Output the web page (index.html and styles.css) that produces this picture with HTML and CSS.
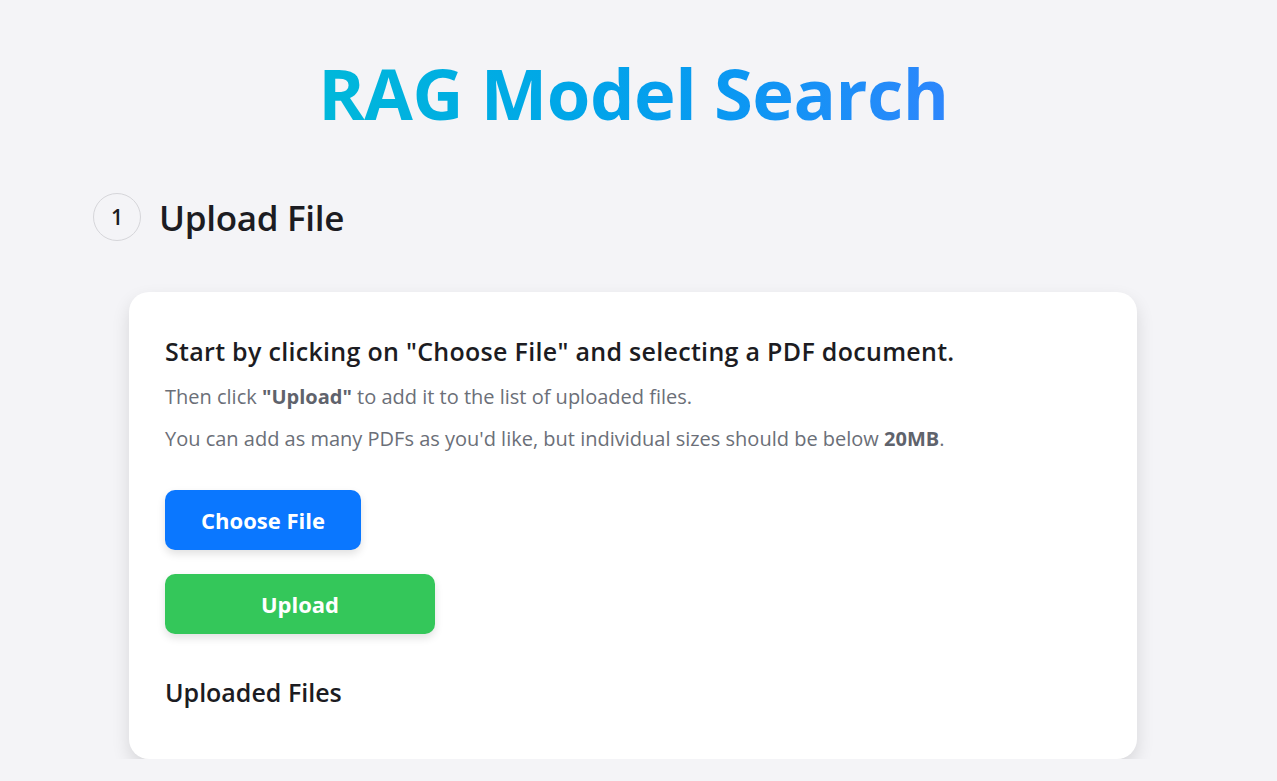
FILE: index.html
```html
<!DOCTYPE html>
<html lang="en">
<head>
<meta charset="utf-8">
<title>RAG Model Search</title>
<link rel="stylesheet" href="styles.css">
</head>
<body>
<main class="page">
  <header class="masthead">
    <h1 class="title">RAG Model Search</h1>
  </header>
  <section class="step">
    <div class="step-head">
      <span class="step-num">1</span>
      <h2 class="step-title">Upload File</h2>
    </div>
    <div class="card">
      <h3 class="card-heading">Start by clicking on "Choose File" and selecting a PDF document.</h3>
      <p class="card-text">Then click <strong>"Upload"</strong> to add it to the list of uploaded files.</p>
      <p class="card-text">You can add as many PDFs as you'd like, but individual sizes should be below <strong>20MB</strong>.</p>
      <div class="actions">
        <button class="btn btn-choose">Choose File</button>
        <button class="btn btn-upload">Upload</button>
      </div>
      <h3 class="files-heading">Uploaded Files</h3>
    </div>
  </section>
</main>
</body>
</html>
```

FILE: styles.css
```css
* { box-sizing: border-box; }
html, body { margin: 0; padding: 0; }
body {
  background: #f4f4f7;
  font-family: "Open Sans", "Noto Sans", sans-serif;
  color: #1c1c22;
}
.page {
  width: 1277px;
  padding-top: 48px;
}
.masthead {
  display: flex;
  justify-content: center;
  padding-right: 10px;
}
.title {
  margin: 0;
  font-size: 70.5px;
  font-weight: 700;
  line-height: 90px;
  letter-spacing: -0.5px;
  background: linear-gradient(90deg, #00b8da 0%, #00a6e8 40%, #0a98f2 65%, #2e86fc 100%);
  -webkit-background-clip: text;
  background-clip: text;
  color: transparent;
}
.step {
  padding-left: 93px;
}
.step-head {
  display: flex;
  align-items: center;
  gap: 18px;
  margin-top: 55px;
}
.step-num {
  width: 48px;
  height: 48px;
  border: 1px solid #d6d6da;
  border-radius: 50%;
  display: flex;
  align-items: center;
  justify-content: center;
  font-size: 21px;
  font-weight: 600;
  color: #1c1c22;
}
.step-title {
  margin: 0;
  font-size: 35px;
  font-weight: 600;
  letter-spacing: -0.3px;
}
.card {
  margin: 51px 0 0 36px;
  width: 1008px;
  height: 467px;
  background: #fff;
  border-radius: 20px;
  box-shadow: 0 8px 18px rgba(0,0,0,0.12);
  padding: 42px 36px;
}
.card-heading {
  margin: 0 0 8px;
  font-size: 25px;
  font-weight: 600;
  letter-spacing: 0.3px;
  line-height: 34px;
}
.card-text {
  margin: 0;
  font-size: 20px;
  color: #6b6f78;
  line-height: 42px;
}
.card-text strong { font-weight: 700; color: #5f636c; }
.actions {
  display: flex;
  flex-direction: column;
  align-items: flex-start;
  gap: 24px;
  margin-top: 30px;
}
.btn {
  border: none;
  height: 60px;
  border-radius: 10px;
  color: #fff;
  font-family: inherit;
  font-size: 22px;
  font-weight: 700;
  box-shadow: 0 4px 8px rgba(0,0,0,0.12);
}
.btn-choose { width: 196px; background: #0a77ff; }
.btn-upload { width: 270px; background: #34c75a; }
.files-heading {
  margin: 41px 0 0;
  font-size: 25px;
  font-weight: 600;
  line-height: 34px;
}
```
